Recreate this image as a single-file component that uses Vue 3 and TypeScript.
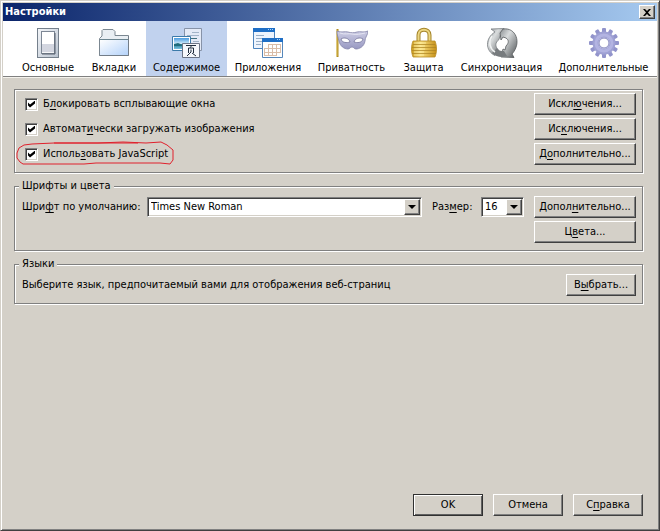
<script setup lang="ts">
import { ref } from 'vue'

/** Caption split around its keyboard mnemonic: before, underlined letter, after. */
type Caption = [string, string, string]

interface Pane {
  id: string
  title: string
}

interface Option {
  id: string
  caption: Caption
  action: Caption
  circled: boolean
}

const panes: Pane[] = [
  { id: 'main', title: 'Основные' },
  { id: 'tabs', title: 'Вкладки' },
  { id: 'content', title: 'Содержимое' },
  { id: 'apps', title: 'Приложения' },
  { id: 'privacy', title: 'Приватность' },
  { id: 'security', title: 'Защита' },
  { id: 'sync', title: 'Синхронизация' },
  { id: 'advanced', title: 'Дополнительные' },
]

const options: Option[] = [
  { id: 'popups', caption: ['Б', 'л', 'окировать всплывающие окна'], action: ['Искл', 'ю', 'чения...'], circled: false },
  { id: 'images', caption: ['Автомат', 'и', 'чески загружать изображения'], action: ['Ис', 'к', 'лючения...'], circled: false },
  { id: 'script', caption: ['Исполь', 'з', 'овать JavaScript'], action: ['Д', 'о', 'полнительно...'], circled: true },
]

const activePane = ref('content')
const enabled = ref<string[]>(['popups', 'images', 'script'])
const font = ref('Times New Roman')
const fontSize = ref('16')
const teeth = [0, 30, 60, 90, 120, 150, 180, 210, 240, 270, 300, 330]
</script>

<template>
  <main class="window">
    <header class="titlebar">
      <h1>Настройки</h1>
      <button class="close" type="button" aria-label="Закрыть">
        <svg viewBox="0 0 8 7" width="8" height="7"><path d="M0 0h2l2 2 2-2h2L5 3.500 8 7H6L4 5 2 7H0l3-3.500z" /></svg>
      </button>
    </header>

    <nav class="panes">
      <button
        v-for="pane in panes"
        :key="pane.id"
        type="button"
        class="pane"
        :class="{ active: pane.id === activePane }"
        @click="activePane = pane.id"
      >
        <svg class="icon" viewBox="0 0 32 32" aria-hidden="true">
          <defs>
            <linearGradient id="g-plate" x1="0" y1="0" x2="1" y2="1"><stop offset="0" stop-color="#f4f6f9" /><stop offset="1" stop-color="#b9c3d0" /></linearGradient>
            <linearGradient id="g-folder" x1="0" y1="0" x2="1" y2="1"><stop offset="0" stop-color="#fff" /><stop offset="1" stop-color="#b5d3fa" /></linearGradient>
            <linearGradient id="g-sky" x1="0" y1="0" x2="0" y2="1"><stop offset="0" stop-color="#4a9be0" /><stop offset=".55" stop-color="#d9f1fb" /><stop offset=".6" stop-color="#2b7f93" /><stop offset="1" stop-color="#79c3e4" /></linearGradient>
            <linearGradient id="g-mask" x1="0" y1="0" x2="0" y2="1"><stop offset="0" stop-color="#cdcde4" /><stop offset="1" stop-color="#9899c2" /></linearGradient>
            <linearGradient id="g-gold" x1="0" y1="0" x2="1" y2="0"><stop offset="0" stop-color="#c99a1c" /><stop offset=".35" stop-color="#fbe284" /><stop offset="1" stop-color="#c58f16" /></linearGradient>
            <linearGradient id="g-steel" x1="0" y1="0" x2="1" y2="1"><stop offset="0" stop-color="#8a8f92" /><stop offset=".35" stop-color="#d9dcdd" /><stop offset="1" stop-color="#4c5053" /></linearGradient>
          </defs>
          <g v-if="pane.id === 'main'">
            <rect x="5.500" y="1.500" width="21" height="29" fill="url(#g-plate)" stroke="#75808c" />
            <rect x="9.500" y="4.500" width="13" height="22" fill="#f5f6f8" stroke="#7d8795" />
            <path d="M10 17h12v8H10z" fill="#d3d6e0" />
            <path d="M10 5h12v12H10z" fill="#fff" />
            <path d="M10 27h13V6" fill="none" stroke="#59606e" />
          </g>
          <g v-else-if="pane.id === 'tabs'">
            <path d="M1.500 28.500V11.500L4 9V3.500L5 2.500h10l2 2v4h13.500v20z" fill="#e9eef3" stroke="#7b8791" />
            <path d="M2 12.500h28V28H2z" fill="url(#g-folder)" />
            <path d="M2 12.500h28" stroke="#6b8490" />
            <path d="M1.500 28.500h29V9" fill="none" stroke="#737d88" />
          </g>
          <g v-else-if="pane.id === 'content'">
            <path d="M13.500 1.500h17v22h-17z" fill="#e4eaf6" stroke="#8793a8" />
            <path d="M21 5.500h7M16 8.500h12M22 14.500h6" stroke="#a3b4c8" />
            <path d="M16 11.500h10" stroke="#416e7d" />
            <path d="M1.500 9.500h18v14h-18z" fill="#fff" stroke="#3c7aa9" />
            <path d="M3 11h15v11H3z" fill="url(#g-sky)" />
            <path d="M3 17l4-1 5 2 6-1v2H3z" fill="#1e6c7d" />
            <path d="M11.500 16.500h17v14h-17z" fill="#f5f7fb" stroke="#6b7486" />
            <path d="M15 18.500h10M20.500 18.500l-1 2M17.500 26v-5h5v5M20 22.500v2.500l-4 4M21 26l4 3" fill="none" stroke="#1f2c3c" />
          </g>
          <g v-else-if="pane.id === 'apps'">
            <path d="M1.500 1.500h21v20h-21z" fill="#eef4fd" stroke="#4c83bd" />
            <path d="M1 1h22v4H1z" fill="#1f6fc6" />
            <path d="M16 2.500h5" stroke="#a4d2ff" stroke-dasharray="1 1" />
            <path d="M4 8.500h8M4 11.500h6M4 14.500h7M4 17.500h5" stroke="#99afc7" />
            <path d="M10.500 11.500h20v19h-20z" fill="#fff" stroke="#5687ba" />
            <path d="M10 11h21v4H10z" fill="#1f6fc6" />
            <path d="M25 12.500h4" stroke="#a4d2ff" stroke-dasharray="1 1" />
            <path d="M16.500 17v12M20.500 17v12M24.500 17v12M28.500 17v9M12.500 21v8M16 17.500h13M12 21.500h17M12 25.500h17M12 28.500h13" stroke="#d9bda8" fill="none" />
          </g>
          <g v-else-if="pane.id === 'privacy'">
            <path d="M1.500 2v28" stroke="#b18d20" stroke-width="2" />
            <path d="M1 3v26" stroke="#e8cb62" stroke-width=".7" />
            <path d="M1 4c4 2 8 0 11 1 3 1 6 1 9 0 3-1 7 1 11-1 0 4-3 6-3 10-1 6-6 8-9 8-2 0-2-2-4-2s-2 2-4 2c-4 0-8-3-9-8-1-4-2-6-2-10z" fill="url(#g-mask)" stroke="#8484a9" stroke-width=".8" />
            <path d="M4 6c5 2 8 0 12 1s9 0 13-1" fill="none" stroke="#e5e5f3" />
            <path d="M5 12c3-2 8-1 9 3-3 1-8 1-9-3zM27 12c-3-2-8-1-9 3 3 1 8 1 9-3z" fill="#fff" stroke="#74749b" stroke-width=".8" />
          </g>
          <g v-else-if="pane.id === 'security'">
            <path d="M10.500 15V8c0-7 11-7 11 0v7" fill="none" stroke="#a5852b" stroke-width="4" />
            <path d="M10.500 15V8c0-7 11-7 11 0v7" fill="none" stroke="#ecd681" stroke-width="2" />
            <path d="M5 14h22c2 5 2 11 0 16H5c-2-5-2-11 0-16z" fill="url(#g-gold)" stroke="#b78a22" stroke-width=".8" />
            <path d="M5 17.500h22M4 20.500h24M4 23.500h24M4 26.500h24" stroke="#ab8222" stroke-width=".7" />
            <path d="M6 16h12M6 19h11M6 22h11M6 25h10M6 28h10" stroke="#fff0a8" stroke-width=".8" />
          </g>
          <g v-else-if="pane.id === 'sync'">
            <path d="M5 2 18 1.500l-2 8-2-1-1 4c-4 3-4 7-1 10l-3 6C-1 24-1 11 9 5z" fill="url(#g-steel)" stroke="#777c80" stroke-width=".8" />
            <path d="M28 30.500 15 30l2-8 2 1 1-4c3-3 3-6 0-8l-3-1-2 3-1-7 3-4c13-2 19 14 9 25z" fill="url(#g-steel)" stroke="#55595c" stroke-width=".8" />
            <path d="M11 21c2 3 4 3 7 3l3 5c-5 2-11 1-15-3z" fill="#777b7e" />
            <path d="M6 9c-4 6-2 13 3 16" fill="none" stroke="#f1f3f3" stroke-width="1.500" />
          </g>
          <g v-else>
            <rect v-for="angle in teeth" :key="angle" x="14" y="1" width="4" height="7" rx="1" fill="#9294cb" :transform="`rotate(${angle} 16 16)`" />
            <circle cx="16" cy="16" r="8.500" fill="none" stroke="#9fa1d4" stroke-width="6" />
            <circle cx="16" cy="16" r="8" fill="none" stroke="#b3b4e2" stroke-width="3" />
            <circle cx="16" cy="16" r="5" fill="#fff" stroke="#8284bd" />
          </g>
        </svg>
        <span>{{ pane.title }}</span>
      </button>
    </nav>

    <form class="content" @submit.prevent>
      <section class="group options">
        <div v-for="option in options" :key="option.id" class="row">
          <label class="check">
            <input v-model="enabled" type="checkbox" :value="option.id" />
            <span>{{ option.caption[0] }}<u>{{ option.caption[1] }}</u>{{ option.caption[2] }}</span>
            <svg v-if="option.circled" class="ring" viewBox="0 0 160 26" aria-hidden="true">
              <path d="M122 3H38L16 4 8 5 3 8 1 13v5l3 4 3 2h61l12-1h64l10 1 3-4V10l-6-5-6-3-15 1-23-1-25 1H38" />
            </svg>
          </label>
          <button class="btn" type="button">{{ option.action[0] }}<u>{{ option.action[1] }}</u>{{ option.action[2] }}</button>
        </div>
      </section>

      <fieldset class="group fonts">
        <legend>Шрифты и цвета</legend>
        <div class="font-grid">
          <label for="font">Шри<u>ф</u>т по умолчанию:</label>
          <span class="dropdown">
            <select id="font" v-model="font">
              <option>Times New Roman</option>
              <option>Arial</option>
            </select>
            <span class="arrow"></span>
          </span>
          <label for="size">Раз<u>м</u>ер:</label>
          <span class="dropdown">
            <select id="size" v-model="fontSize">
              <option>14</option>
              <option>16</option>
              <option>18</option>
            </select>
            <span class="arrow"></span>
          </span>
          <button class="btn" type="button">Допол<u>н</u>ительно...</button>
          <button class="btn colors" type="button">Ц<u>в</u>ета...</button>
        </div>
      </fieldset>

      <fieldset class="group langs">
        <legend>Языки</legend>
        <div class="row">
          <p>Выберите язык, предпочитаемый вами для отображения веб-страниц</p>
          <button class="btn small" type="button">В<u>ы</u>брать...</button>
        </div>
      </fieldset>

      <footer class="actions">
        <button class="btn small default" type="submit">OK</button>
        <button class="btn small" type="button">Отмена</button>
        <button class="btn small" type="button">С<u>п</u>равка</button>
      </footer>
    </form>
  </main>
</template>

<style>
body {
  margin: 0;
  background: #d4d0c8;
}
</style>

<style scoped>
.window {
  box-sizing: border-box;
  display: flex;
  flex-direction: column;
  min-height: 100vh;
  padding: 1px;
  border: 1px solid;
  border-color: #d4d0c8 #404040 #404040 #d4d0c8;
  box-shadow: inset 1px 1px #fff, inset -1px -1px #808080;
  background: #d4d0c8;
  color: #000;
  font: 11px/14px "DejaVu Sans Condensed", "DejaVu Sans", sans-serif;
}

button,
select {
  font: inherit;
  color: inherit;
}

u {
  text-underline-offset: 2px;
  text-decoration-thickness: 1px;
  text-decoration-skip-ink: none;
}

.titlebar {
  display: flex;
  align-items: center;
  justify-content: space-between;
  height: 18px;
  margin: 1px 1px 0;
  padding: 0 2px;
  background: linear-gradient(90deg, #0a246a, #a6caf0);
}

h1 {
  margin: 0;
  color: #fff;
  font-size: 11px;
  line-height: 16px;
}

.close {
  display: grid;
  place-items: center;
  width: 16px;
  height: 14px;
  padding: 0;
  border: 1px solid;
  border-color: #fff #404040 #404040 #fff;
  box-shadow: inset -1px -1px #808080;
  background: #d4d0c8;
}

.panes {
  display: grid;
  grid-template-columns: 68fr 64fr 81fr 82fr 85fr 59fr 97fr 107fr;
  margin: 0 1px;
  padding-left: 11px;
  border-bottom: 1px solid #808080;
  background: #fff;
  box-shadow: 0 1px #f4f2ec;
}

.pane {
  display: flex;
  flex-direction: column;
  align-items: center;
  min-width: 0;
  padding: 6px 0 1px;
  border: 0;
  background: none;
  white-space: nowrap;
}

.pane.active {
  background: #c1d2ee;
}

.icon {
  width: 32px;
  height: 32px;
  margin-bottom: 2px;
}

.content {
  display: flex;
  flex: 1;
  flex-direction: column;
  padding: 12px 15px 13px 12px;
}

.group {
  min-width: 0;
  margin: 0;
  border: 1px solid #808080;
  box-shadow: inset 1px 1px #fff, 1px 1px #fff;
}

.options {
  display: grid;
  gap: 3px;
  padding: 3px 6px 7px 10px;
}

.row {
  display: flex;
  align-items: center;
  justify-content: space-between;
}

.check {
  position: relative;
  display: flex;
  align-items: center;
  gap: 5px;
}

.check input {
  appearance: none;
  width: 13px;
  height: 13px;
  margin: 0;
  border: 1px solid;
  border-color: #808080 #fff #fff #808080;
  box-shadow: inset 1px 1px #404040, inset -1px -1px #d4d0c8;
  background: #fff;
}

.check input:checked::before {
  content: "";
  display: block;
  width: 7px;
  height: 7px;
  margin: 2px;
  background: #000;
  clip-path: polygon(0 29%, 29% 57%, 100% 0, 100% 43%, 29% 100%, 0 71%);
}

.ring {
  position: absolute;
  top: -7px;
  left: -9px;
  width: 160px;
  height: 26px;
  overflow: visible;
  pointer-events: none;
}

.ring path {
  fill: none;
  stroke: #e0202c;
  stroke-width: 1;
}

.btn {
  box-sizing: border-box;
  width: 102px;
  height: 22px;
  padding: 0;
  border: 1px solid;
  border-color: #fff #404040 #404040 #fff;
  box-shadow: inset -1px -1px #808080;
  background: #d4d0c8;
  text-align: center;
  white-space: nowrap;
}

.small {
  width: 70px;
}

.default {
  border-color: #303030;
  box-shadow: inset 1px 1px #fff, inset -1px -1px #606060;
}

legend {
  padding: 0 3px;
  margin-left: -3px;
  background: #d4d0c8;
  line-height: 14px;
}

.fonts,
.langs {
  margin-top: 6px;
  padding: 0 6px 7px 7px;
}

.font-grid {
  display: grid;
  grid-template-columns: 115px 1fr 39px 43px 102px;
  gap: 3px 10px;
  align-items: center;
  padding-top: 3px;
  white-space: nowrap;
}

.colors {
  grid-column: 5;
}

.dropdown {
  position: relative;
  display: block;
}

.dropdown select {
  appearance: none;
  box-sizing: border-box;
  display: block;
  width: 100%;
  height: 20px;
  padding: 0 18px 0 3px;
  border: 1px solid;
  border-color: #808080 #fff #fff #808080;
  border-radius: 0;
  box-shadow: inset 1px 1px #404040, inset -1px -1px #d4d0c8;
  background: #fff;
}

.arrow {
  position: absolute;
  top: 2px;
  right: 2px;
  bottom: 2px;
  display: grid;
  place-items: center;
  box-sizing: border-box;
  width: 16px;
  border: 1px solid;
  border-color: #fff #404040 #404040 #fff;
  box-shadow: inset -1px -1px #808080;
  background: #d4d0c8;
  pointer-events: none;
}

.arrow::before {
  content: "";
  border: solid transparent;
  border-width: 4px 4px 0;
  border-top-color: #000;
}

p {
  margin: 0;
}

.langs .row {
  padding-top: 3px;
}

.actions {
  display: flex;
  justify-content: flex-end;
  gap: 10px;
  margin-top: auto;
}
</style>
